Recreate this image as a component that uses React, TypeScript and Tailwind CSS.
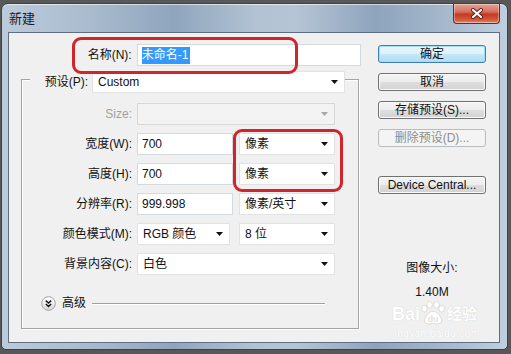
import type { ReactNode } from 'react'

const FONT = "font-['Liberation_Sans','Noto_Sans_CJK_SC',sans-serif]"

function Caret({ muted = false }: { muted?: boolean }) {
  return (
    <svg width="7" height="4" viewBox="0 0 7 4" className="shrink-0">
      <polygon points="0,0 7,0 3.5,4" fill={muted ? '#a8a8a8' : '#111'} />
    </svg>
  )
}

function Select({ value, className = '', disabled = false }: { value?: string; className?: string; disabled?: boolean }) {
  return (
    <div
      className={`flex h-[22px] items-center justify-between border pl-[5px] pr-[6px] ${
        disabled ? 'border-[#d8d8d8] bg-[#f3f3f3]' : 'border-[#e2e2e2] bg-white'
      } ${className}`}
    >
      <span>{value}</span>
      <Caret muted={disabled} />
    </div>
  )
}

function TextBox({ children, className = '' }: { children: ReactNode; className?: string }) {
  return (
    <div className={`flex h-[22px] items-center border border-[#d3dae2] bg-white pl-[4px] ${className}`}>
      {children}
    </div>
  )
}

function Row({ label, muted = false, children }: { label: string; muted?: boolean; children: ReactNode }) {
  return (
    <div className="flex h-[22px] items-center">
      <span className={`w-[110px] text-right ${muted ? 'text-[#a0a0a0]' : ''}`}>{label}</span>
      <div className="ml-[5px] flex">{children}</div>
    </div>
  )
}

function Btn({ children, kind = 'normal', className = '' }: { children: ReactNode; kind?: 'default' | 'normal' | 'disabled'; className?: string }) {
  const look =
    kind === 'default'
      ? 'border-[#3c7fb1] bg-[linear-gradient(to_bottom,#eaf6fd_0%,#dcf1fc_50%,#c4e7fa_51%,#b2dcf3_100%)] shadow-[inset_0_0_0_1px_#9ee0fb]'
      : kind === 'disabled'
        ? 'border-[#b8bcbf] bg-[#f4f4f4] text-[#8d8d8d]'
        : 'border-[#707070] bg-[linear-gradient(to_bottom,#f4f4f4_0%,#ececec_50%,#dedede_51%,#d2d2d2_100%)] shadow-[inset_0_0_0_1px_#fafafa]'
  return (
    <div className={`flex h-[18px] w-[108px] items-center justify-center rounded-[3px] border ${look} ${className}`}>
      {children}
    </div>
  )
}

function AdvancedIcon() {
  return (
    <svg width="15" height="15" viewBox="0 0 15 15" className="shrink-0">
      <defs>
        <linearGradient id="adv" x1="0" y1="0" x2="0" y2="1">
          <stop offset="0" stopColor="#ffffff" />
          <stop offset="1" stopColor="#d9d9d9" />
        </linearGradient>
      </defs>
      <circle cx="7.5" cy="7.5" r="6.8" fill="url(#adv)" stroke="#a2a2a2" />
      <path d="M4.8 4.6 L7.5 7 L10.2 4.6 M4.8 8 L7.5 10.4 L10.2 8" fill="none" stroke="#1a1a1a" strokeWidth="1.5" />
    </svg>
  )
}

function CloseX() {
  return (
    <svg width="14" height="11" viewBox="0 0 14 11">
      <path d="M3 2 L11 9 M11 2 L3 9" stroke="#5b1f18" strokeWidth="4" strokeLinecap="round" />
      <path d="M3 2 L11 9 M11 2 L3 9" stroke="#ffffff" strokeWidth="2.2" strokeLinecap="round" />
    </svg>
  )
}

function Paw() {
  return (
    <svg width="26" height="26" viewBox="0 0 30 28">
      <g fill="#ffffff" stroke="#d6d6d6" strokeWidth="1">
        <ellipse cx="5" cy="9" rx="3.2" ry="4" />
        <ellipse cx="11" cy="4.5" rx="3.2" ry="4" />
        <ellipse cx="19" cy="4.5" rx="3.2" ry="4" />
        <ellipse cx="25" cy="9" rx="3.2" ry="4" />
        <path d="M15 12 C10 12 5 19 5 23 C5 27 10 27 15 26 C20 27 25 27 25 23 C25 19 20 12 15 12 Z" />
      </g>
      <text x="15" y="24" textAnchor="middle" fontSize="10" fontWeight="bold" fill="#e2e2e2" fontFamily="Liberation Sans, sans-serif">
        du
      </text>
    </svg>
  )
}

export default function App() {
  return (
    <div className={`relative h-[354px] w-[511px] overflow-hidden bg-[#585858] ${FONT} text-[12px] leading-[16px] text-[#111]`}>
      <div className="ml-[1px] mt-[3px] flex h-[347px] w-[507px] flex-col rounded-t-[7px] rounded-b-[5px] border border-[#39434f] bg-[linear-gradient(to_right,#bccbdb_0%,#a8bacd_18%,#8fa5be_34%,#b2c2d3_50%,#b6c5d5_58%,#8ea4bd_74%,#a5b8cc_88%,#bfcfdf_100%)] pb-[6px] pl-[6px] pr-[7px] shadow-[inset_0_1px_0_rgba(255,255,255,0.6)]">
        {/* title bar */}
        <div className="flex h-[28px] items-start justify-between">
          <span className="ml-[1px] mt-[7px] text-[13px] text-[#1b1b1b]">新建</span>
          <div className="flex h-[20px] w-[47px] items-center justify-center rounded-b-[4px] border border-t-0 border-[#6b2b23] bg-[linear-gradient(to_bottom,#e3a597_0%,#d6705f_40%,#c43a22_55%,#d25c40_85%,#e2907a_100%)] shadow-[inset_0_0_0_1px_rgba(255,255,255,0.35)]">
            <CloseX />
          </div>
        </div>

        {/* client area */}
        <div className="flex flex-1 border border-[#5f6e81] bg-[#f0f0f0] pl-[12px] pt-[11px]">
          {/* left column */}
          <div className="flex w-[340px] flex-col">
            <div className="flex h-[22px] items-center">
              <span className="w-[111px] text-right">名称(N):</span>
              <TextBox className="ml-[5px] w-[225px] pl-[3px]">
                <span className="bg-[#3399ff] pr-[2px] leading-[17px] text-white">未命名-1</span>
              </TextBox>
            </div>

            <div className="mt-[13px] h-[250px] w-[338px] border border-[#a3a3a3] shadow-[inset_1px_1px_0_#ffffff,1px_1px_0_#ffffff]">
              <div className="-mt-[9px] ml-[8px] flex h-[22px] w-[315px] items-center bg-[#f0f0f0]">
                <span className="w-[58px] text-right">预设(P):</span>
                <Select value="Custom" className="ml-[4px] w-[253px]" />
              </div>

              <div className="mt-[10px] flex flex-col gap-[8px]">
                <Row label="Size:" muted>
                  <Select disabled className="w-[198px]" />
                </Row>
                <Row label="宽度(W):">
                  <TextBox className="w-[96px]">700</TextBox>
                  <Select value="像素" className="ml-[6px] w-[96px]" />
                </Row>
                <Row label="高度(H):">
                  <TextBox className="w-[96px]">700</TextBox>
                  <Select value="像素" className="ml-[6px] w-[96px]" />
                </Row>
                <Row label="分辨率(R):">
                  <TextBox className="w-[96px]">999.998</TextBox>
                  <Select value="像素/英寸" className="ml-[6px] w-[96px]" />
                </Row>
                <Row label="颜色模式(M):">
                  <Select value="RGB 颜色" className="w-[93px]" />
                  <Select value="8 位" className="ml-[9px] w-[96px]" />
                </Row>
                <Row label="背景内容(C):">
                  <Select value="白色" className="w-[198px]" />
                </Row>
              </div>

              <div className="mt-[20px] flex h-[16px] items-center pl-[19px]">
                <AdvancedIcon />
                <span className="ml-[6px]">高级</span>
                <div className="ml-[6px] h-px w-[233px] bg-[#a0a0a0] shadow-[0_1px_0_#ffffff]" />
              </div>
            </div>
          </div>

          {/* right column */}
          <div className="ml-[17px] mt-[1px] flex w-[108px] flex-col">
            <Btn kind="default">确定</Btn>
            <Btn className="mt-[10px]">取消</Btn>
            <Btn className="mt-[10px]">存储预设(S)...</Btn>
            <Btn kind="disabled" className="mt-[10px]">删除预设(D)...</Btn>
            <Btn className="mt-[29px]">Device Central...</Btn>
            <div className="mt-[66px] text-center">图像大小:</div>
            <div className="mt-[8px] text-center">1.40M</div>
          </div>
        </div>
      </div>

      {/* red annotation marks */}
      <div className="pointer-events-none absolute left-[72px] top-[37px] h-[37px] w-[226px] rounded-[9px] border-[3px] border-[#d3242c]" />
      <div className="pointer-events-none absolute left-[233px] top-[129px] h-[63px] w-[110px] rounded-[9px] border-[3px] border-[#d3242c]" />

      {/* watermark */}
      <div className="pointer-events-none absolute left-[392px] top-[300px] flex flex-col">
        <div className="flex items-end">
          <span className="text-[18px] font-bold leading-[24px] text-white [text-shadow:0_0_1px_#c4c4c4]">Bai</span>
          <Paw />
          <span className="ml-[1px] text-[15px] font-bold leading-[24px] text-white [text-shadow:0_0_1px_#c4c4c4]">经验</span>
        </div>
        <span className="mt-[3px] text-[10px] leading-[10px] tracking-[0.4px] text-white [text-shadow:0_0_1px_#d0d0d0]">jingyan.baidu.com</span>
      </div>
    </div>
  )
}
